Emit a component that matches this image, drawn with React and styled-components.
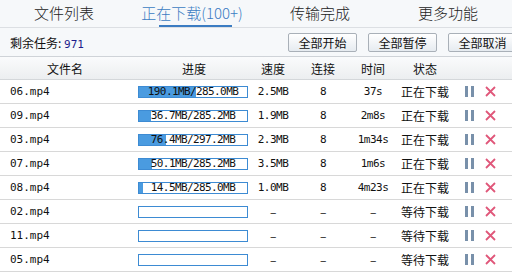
import React from "react";
import styled, { createGlobalStyle } from "styled-components";

const tasks = [
    { name: "06.mp4", done: "190.1MB", total: "285.0MB", fill: 53, speed: "2.5MB", conn: "8", time: "37s", state: "正在下载" },
    { name: "09.mp4", done: "36.7MB", total: "285.2MB", fill: 11, speed: "1.9MB", conn: "8", time: "2m8s", state: "正在下载" },
    { name: "03.mp4", done: "76.4MB", total: "297.2MB", fill: 25, speed: "2.3MB", conn: "8", time: "1m34s", state: "正在下载" },
    { name: "07.mp4", done: "50.1MB", total: "285.2MB", fill: 12, speed: "3.5MB", conn: "8", time: "1m6s", state: "正在下载" },
    { name: "08.mp4", done: "14.5MB", total: "285.0MB", fill: 4, speed: "1.0MB", conn: "8", time: "4m23s", state: "正在下载" },
    { name: "02.mp4", state: "等待下载" },
    { name: "11.mp4", state: "等待下载" },
    { name: "05.mp4", state: "等待下载" },
];

const tabs = ["文件列表", "正在下载(100+)", "传输完成", "更多功能"];

export default function App() {
    return (
        <>
            <GlobalStyle />
            <StyledPage>
                <StyledTabs>
                    {tabs.map((t, i) => (
                        <StyledTab key={t} $active={i === 1}>{t}</StyledTab>
                    ))}
                </StyledTabs>
                <StyledToolbar>
                    <StyledRemain>剩余任务: <StyledCount>971</StyledCount></StyledRemain>
                    <StyledButtons>
                        <StyledButton>全部开始</StyledButton>
                        <StyledButton>全部暂停</StyledButton>
                        <StyledButton>全部取消</StyledButton>
                    </StyledButtons>
                </StyledToolbar>
                <StyledHead>
                    <StyledCell $align="center">文件名</StyledCell>
                    <StyledCell $align="center">进度</StyledCell>
                    <StyledCell $align="center">速度</StyledCell>
                    <StyledCell $align="center">连接</StyledCell>
                    <StyledCell $align="center">时间</StyledCell>
                    <StyledCell $align="center">状态</StyledCell>
                    <StyledCell />
                </StyledHead>
                {tasks.map((t) => (
                    <StyledRow key={t.name}>
                        <StyledName>{t.name}</StyledName>
                        <StyledCell $align="center">
                            <StyledBar>
                                {t.done && <StyledFill style={{ width: `${t.fill}%` }} />}
                                {t.done && <StyledBarText>{t.done}/{t.total}</StyledBarText>}
                            </StyledBar>
                        </StyledCell>
                        <StyledNum $empty={!t.speed}>{t.speed || "–"}</StyledNum>
                        <StyledNum $empty={!t.conn}>{t.conn || "–"}</StyledNum>
                        <StyledNum $empty={!t.time}>{t.time || "–"}</StyledNum>
                        <StyledCell $align="center">{t.state}</StyledCell>
                        <StyledActions>
                            <StyledPause><span /><span /></StyledPause>
                            <svg width="11" height="11" viewBox="0 0 11 11">
                                <path d="M1 1L10 10M10 1L1 10" stroke="#e0577a" strokeWidth="1.8" />
                            </svg>
                        </StyledActions>
                    </StyledRow>
                ))}
            </StyledPage>
        </>
    );
}

const GlobalStyle = createGlobalStyle`
    body {
        margin: 0;
        background: #fff;
        font-family: "Noto Sans CJK SC", sans-serif;
        font-size: 12px;
        color: #111;
    }
`;

const StyledPage = styled.div`
    width: 512px;
    height: 278px;
    overflow: hidden;
`;

const StyledTabs = styled.div`
    display: grid;
    grid-template-columns: repeat(4, 128px);
    height: 28px;
    background: #f6f8fa;
    border-bottom: 1px solid #dcdfe3;
    box-sizing: border-box;
`;

const StyledTab = styled.div`
    position: relative;
    text-align: center;
    font-size: 15px;
    font-weight: 300;
    line-height: 26px;
    color: ${(p) => (p.$active ? "#3b7cc2" : "#222")};

    &::after {
        content: "";
        display: ${(p) => (p.$active ? "block" : "none")};
        position: absolute;
        left: 31px;
        width: 73px;
        bottom: 0;
        height: 2px;
        background: #3b7cc2;
    }
`;

const StyledToolbar = styled.div`
    display: flex;
    align-items: center;
    justify-content: space-between;
    height: 29px;
    padding-left: 10px;
    background: #f6f8fa;
    border-bottom: 1px solid #cfd3d8;
    box-sizing: border-box;
`;

const StyledRemain = styled.span`
    font-size: 12px;
`;

const StyledCount = styled.span`
    font-family: "DejaVu Sans Mono", monospace;
    font-size: 11px;
    color: #1c1c8c;
`;

const StyledButtons = styled.div`
    display: flex;
    gap: 11px;
    margin-right: -5px;
`;

const StyledButton = styled.button`
    width: 69px;
    height: 19px;
    padding: 0;
    font-family: "Noto Sans CJK SC", sans-serif;
    font-size: 12px;
    color: #111;
    border: 1px solid #a9b0b8;
    border-radius: 2px;
    background: linear-gradient(#ffffff, #e6ebf0);
    line-height: 17px;
`;

const StyledGrid = styled.div`
    display: grid;
    grid-template-columns: 130px 128px 30px 70px 30px 74px 50px;
    align-items: center;
    height: 24px;
    box-sizing: border-box;
`;

const StyledHead = styled(StyledGrid)`
    height: 23px;
    background: linear-gradient(#fafbfc, #eceef0);
    border-bottom: 1px solid #d4d7da;
    font-size: 12px;
`;

const StyledRow = styled(StyledGrid)`
    border-bottom: 1px solid #d8d8d8;
`;

const StyledCell = styled.div`
    white-space: nowrap;
    display: flex;
    justify-content: ${(p) => (p.$align === "center" ? "center" : "flex-start")};
`;

const StyledName = styled.div`
    padding-left: 10px;
    font-family: "DejaVu Sans Mono", monospace;
    font-size: 11px;
`;

const StyledNum = styled.div`
    white-space: nowrap;
    font-family: ${(p) => (p.$empty ? "\"Noto Sans CJK SC\", sans-serif" : "\"DejaVu Sans Mono\", monospace")};
    font-size: ${(p) => (p.$empty ? "12px" : "11px")};
    letter-spacing: -0.5px;
    display: flex;
    justify-content: center;
`;

const StyledBar = styled.div`
    position: relative;
    width: 110px;
    height: 12px;
    border: 1px solid #3d8bd3;
    box-sizing: border-box;
    background: #fff;
    margin-left: -2px;
`;

const StyledFill = styled.div`
    position: absolute;
    left: 0;
    top: 0;
    bottom: 0;
    background: #4a9be0;
`;

const StyledBarText = styled.div`
    position: relative;
    text-align: center;
    font-family: "DejaVu Sans Mono", monospace;
    font-size: 11px;
    letter-spacing: -0.6px;
    line-height: 10px;
    color: #111;
`;

const StyledActions = styled.div`
    display: flex;
    align-items: center;
    gap: 11px;
    padding-left: 3px;
`;

const StyledPause = styled.div`
    display: flex;
    gap: 3px;
    span {
        width: 3px;
        height: 11px;
        background: #7890aa;
    }
`;
